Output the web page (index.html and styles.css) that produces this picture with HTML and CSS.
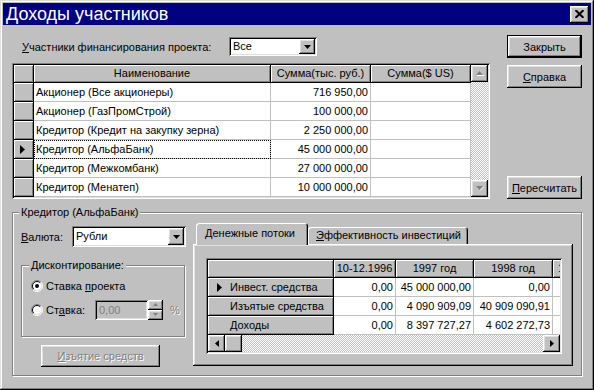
FILE: index.html
```html
<!DOCTYPE html>
<html lang="ru">
<head>
<meta charset="utf-8">
<title>Доходы участников</title>
<link rel="stylesheet" href="styles.css">
</head>
<body>
<div class="window">
  <div class="titlebar">
    <span class="title">Доходы участников</span>
    <div class="close btn-raised">
      <svg width="9" height="8" viewBox="0 0 9 8"><path d="M0.5 0 L8.5 8 M8.5 0 L0.5 8" stroke="#000" stroke-width="2"/></svg>
    </div>
  </div>
  <div class="content">
    <div class="top">
      <div class="left">
        <div class="filter">
          <span class="filter-label"><u>У</u>частники финансирования проекта:</span>
          <div class="combo combo-all">
            <span class="combo-val">Все</span>
            <span class="dd btn-raised"><svg width="7" height="4" viewBox="0 0 7 4"><path d="M0 0H7L3.5 4Z" fill="#000"/></svg></span>
          </div>
        </div>
        <div class="dbgrid">
          <div class="cells cells-top">
            <div class="fx"></div>
            <div class="fx hd">Наименование</div>
            <div class="fx hd">Сумма(тыс. руб.)</div>
            <div class="fx hd">Сумма($ US)</div>

            <div class="fx"></div>
            <div class="c">Акционер (Все акционеры)</div>
            <div class="c num">716 950,00</div>
            <div class="c"></div>

            <div class="fx"></div>
            <div class="c">Акционер (ГазПромСтрой)</div>
            <div class="c num">100 000,00</div>
            <div class="c"></div>

            <div class="fx"></div>
            <div class="c">Кредитор (Кредит на закупку зерна)</div>
            <div class="c num">2 250 000,00</div>
            <div class="c"></div>

            <div class="fx ind"><svg width="5" height="9" viewBox="0 0 5 9"><path d="M0 0L5 4.5L0 9Z" fill="#000"/></svg></div>
            <div class="c focus">Кредитор (АльфаБанк)</div>
            <div class="c num">45 000 000,00</div>
            <div class="c"></div>

            <div class="fx"></div>
            <div class="c">Кредитор (Межкомбанк)</div>
            <div class="c num">27 000 000,00</div>
            <div class="c"></div>

            <div class="fx"></div>
            <div class="c">Кредитор (Менатеп)</div>
            <div class="c num">10 000 000,00</div>
            <div class="c"></div>
          </div>
          <div class="vscroll">
            <div class="sb-btn btn-raised"><svg width="8" height="5" viewBox="0 0 8 5"><path d="M3.5 0L7 4H0Z" fill="#808080"/><path d="M1 4.5H8" stroke="#fff"/></svg></div>
            <div class="track"></div>
            <div class="sb-btn btn-raised"><svg width="8" height="5" viewBox="0 0 8 5"><path d="M0 0H7L3.5 4Z" fill="#808080"/><path d="M4 4.5L8 0.5" stroke="#fff"/></svg></div>
          </div>
        </div>
      </div>
      <div class="buttons">
        <div class="btn btn-default"><span class="btn-in btn-raised">Закрыть</span></div>
        <div class="btn"><span class="btn-in btn-raised"><u>С</u>правка</span></div>
        <div class="spacer"></div>
        <div class="btn"><span class="btn-in btn-raised"><u>П</u>ересчитать</span></div>
      </div>
    </div>

    <fieldset class="group">
      <legend>Кредитор (АльфаБанк)</legend>
      <div class="group-body">
        <div class="gleft">
          <div class="currency">
            <span class="cur-label"><u>В</u>алюта:</span>
            <div class="combo combo-cur">
              <span class="combo-val">Рубли</span>
              <span class="dd btn-raised"><svg width="7" height="4" viewBox="0 0 7 4"><path d="M0 0H7L3.5 4Z" fill="#000"/></svg></span>
            </div>
          </div>
          <fieldset class="disc">
            <legend>Дисконтирование:</legend>
            <div class="radio-row">
              <svg class="radio" width="12" height="12" viewBox="0 0 12 12">
                <circle cx="6" cy="6" r="5" fill="#fff"/>
                <path d="M2.1 9.9A5.5 5.5 0 0 1 9.9 2.1" stroke="#808080" fill="none"/>
                <path d="M9.9 2.1A5.5 5.5 0 0 1 2.1 9.9" stroke="#fff" fill="none"/>
                <path d="M2.8 9.2A4.5 4.5 0 0 1 9.2 2.8" stroke="#000" fill="none"/>
                <path d="M9.2 2.8A4.5 4.5 0 0 1 2.8 9.2" stroke="#dfdfdf" fill="none"/>
                <circle cx="6" cy="6" r="2" fill="#000"/>
              </svg>
              <span>Ставка <u>п</u>роекта</span>
            </div>
            <div class="radio-row">
              <svg class="radio" width="12" height="12" viewBox="0 0 12 12">
                <circle cx="6" cy="6" r="5" fill="#fff"/>
                <path d="M2.1 9.9A5.5 5.5 0 0 1 9.9 2.1" stroke="#808080" fill="none"/>
                <path d="M9.9 2.1A5.5 5.5 0 0 1 2.1 9.9" stroke="#fff" fill="none"/>
                <path d="M2.8 9.2A4.5 4.5 0 0 1 9.2 2.8" stroke="#000" fill="none"/>
                <path d="M9.2 2.8A4.5 4.5 0 0 1 2.8 9.2" stroke="#dfdfdf" fill="none"/>
              </svg>
              <span class="rate-label">Ст<u>а</u>вка:</span>
              <div class="edit">0,00</div>
              <div class="spin">
                <div class="spin-btn btn-raised"><svg width="5" height="3" viewBox="0 0 5 3"><path d="M2.5 0L5 3H0Z" fill="#808080"/></svg></div>
                <div class="spin-btn btn-raised"><svg width="5" height="3" viewBox="0 0 5 3"><path d="M0 0H5L2.5 3Z" fill="#808080"/></svg></div>
              </div>
              <span class="pct">%</span>
            </div>
          </fieldset>
          <div class="btn btn-withdraw"><span class="btn-in btn-raised disabled"><u>И</u>зъятие средств</span></div>
        </div>

        <div class="tabs">
          <div class="tab-row">
            <div class="tab tab-active"><u>Д</u>енежные потоки</div>
            <div class="tab tab-other"><u>Э</u>ффективность инвестиций</div>
          </div>
          <div class="tab-page">
            <div class="dbgrid2">
              <div class="cells cells-bottom">
                <div class="fx"></div>
                <div class="fx hd">10-12.1996</div>
                <div class="fx hd">1997 год</div>
                <div class="fx hd">1998 год</div>
                <div class="fx hd hd-cut">1999 год</div>

                <div class="fx rh"><svg class="rh-ind" width="5" height="9" viewBox="0 0 5 9"><path d="M0 0L5 4.5L0 9Z" fill="#000"/></svg>Инвест. средства</div>
                <div class="c num">0,00</div>
                <div class="c num">45 000 000,00</div>
                <div class="c num">0,00</div>
                <div class="c"></div>

                <div class="fx rh">Изъятые средства</div>
                <div class="c num">0,00</div>
                <div class="c num">4 090 909,09</div>
                <div class="c num">40 909 090,91</div>
                <div class="c"></div>

                <div class="fx rh">Доходы</div>
                <div class="c num">0,00</div>
                <div class="c num">8 397 727,27</div>
                <div class="c num">4 602 272,73</div>
                <div class="c"></div>
              </div>
              <div class="hscroll">
                <div class="sb-btn btn-raised"><svg width="4" height="7" viewBox="0 0 4 7"><path d="M4 0V7L0 3.5Z" fill="#000"/></svg></div>
                <div class="thumb btn-raised"></div>
                <div class="track"></div>
                <div class="sb-btn btn-raised"><svg width="4" height="7" viewBox="0 0 4 7"><path d="M0 0V7L4 3.5Z" fill="#000"/></svg></div>
              </div>
            </div>
          </div>
        </div>
      </div>
    </fieldset>
  </div>
</div>
</body>
</html>
```

FILE: styles.css
```css
* { box-sizing: border-box; }
html, body { margin: 0; padding: 0; }
body {
  width: 594px;
  height: 390px;
  overflow: hidden;
  background: #c0c0c0;
  font-family: "Liberation Sans", Arial, sans-serif;
  font-size: 11px;
  color: #000;
}
u { text-decoration: underline; text-underline-offset: 1px; }

.btn-raised {
  background: #c0c0c0;
  box-shadow: inset -1px -1px #000, inset 1px 1px #fff, inset -2px -2px #808080, inset 2px 2px #dfdfdf;
}

.window {
  width: 594px;
  height: 390px;
  padding: 3px;
  background: #c0c0c0;
  box-shadow: inset -1px -1px #000, inset 1px 1px #dfdfdf, inset -2px -2px #808080, inset 2px 2px #fff;
  display: flex;
  flex-direction: column;
}

.titlebar {
  height: 22px;
  background: #000080;
  color: #fff;
  display: flex;
  align-items: center;
  justify-content: space-between;
  padding: 0 2px 0 3px;
}
.title { font-size: 18px; line-height: 22px; }
.close {
  width: 19px;
  height: 17px;
  display: flex;
  align-items: center;
  justify-content: center;
}

.content { padding: 0 9px; flex: 1; }

.top { display: flex; gap: 17px; }
.left { width: 478px; padding-top: 12px; }

.filter { display: flex; align-items: center; height: 19px; }
.filter-label { width: 217px; padding-left: 10px; white-space: nowrap; }

.combo {
  display: flex;
  background: #fff;
  padding: 2px;
  box-shadow: inset 1px 1px #808080, inset -1px -1px #fff, inset 2px 2px #000, inset -2px -2px #dfdfdf;
}
.combo-all { width: 88px; height: 19px; }
.combo-cur { width: 114px; height: 21px; }
.combo-val { flex: 1; padding-left: 2px; line-height: 15px; }
.combo-cur .combo-val { line-height: 17px; }
.dd { width: 16px; display: flex; align-items: center; justify-content: center; }

.dbgrid {
  margin-top: 7px;
  height: 136px;
  padding: 2px;
  display: flex;
  background: #c0c0c0;
  box-shadow: inset 1px 1px #808080, inset -1px -1px #fff, inset 2px 2px #000, inset -2px -2px #dfdfdf;
}
.cells { display: grid; }
.cells-top {
  grid-template-columns: 20px 237px 100px 100px;
  grid-template-rows: 18px repeat(6, 19px);
}
.fx {
  background: #c0c0c0;
  border-right: 1px solid #000;
  border-bottom: 1px solid #000;
  box-shadow: inset 1px 1px #fff, inset -1px -1px #808080;
  white-space: nowrap;
  overflow: hidden;
}
.hd { text-align: center; line-height: 17px; }
.ind { display: flex; align-items: center; padding-left: 6px; }
.c {
  background: #fff;
  border-right: 1px solid #c0c0c0;
  border-bottom: 1px solid #c0c0c0;
  padding: 0 2px;
  line-height: 18px;
  white-space: nowrap;
  overflow: hidden;
}
.num { text-align: right; }
.focus { outline: 1px dotted #000; outline-offset: -1px; }

.vscroll { width: 17px; display: flex; flex-direction: column; }
.sb-btn {
  width: 17px;
  height: 17px;
  flex: none;
  display: flex;
  align-items: center;
  justify-content: center;
}
.track {
  flex: 1;
  background: repeating-conic-gradient(#fff 0 25%, #c0c0c0 0 50%) 0 0 / 2px 2px;
}

.buttons { width: 75px; padding-top: 10px; display: flex; flex-direction: column; height: 174px; }
.spacer { flex: 1; }
.btn { height: 23px; display: flex; }
.btn + .btn { margin-top: 7px; }
.btn-in {
  flex: 1;
  display: flex;
  align-items: center;
  justify-content: center;
  white-space: nowrap;
}
.btn-default { border: 1px solid #000; }

.group {
  margin: 6px 0 0 0;
  padding: 0 8px 0 8px;
  height: 171px;
  border: 1px solid #808080;
  box-shadow: 1px 1px #fff, inset 1px 1px #fff;
  min-width: 0;
}
.group > legend, .disc > legend {
  padding: 0 2px;
  margin-left: -2px;
  line-height: 14px;
  background: #c0c0c0;
  white-space: nowrap;
}
.group-body { display: flex; gap: 7px; padding-top: 4px; }

.gleft { width: 165px; padding-top: 3px; }
.currency { display: flex; align-items: center; height: 21px; }
.cur-label { width: 51px; }

.disc {
  margin: 11px 1px 0 0;
  padding: 3px 0 0 9px;
  height: 79px;
  border: 1px solid #808080;
  box-shadow: 1px 1px #fff, inset 1px 1px #fff;
  min-width: 0;
}
.radio-row { display: flex; align-items: center; height: 21px; white-space: nowrap; }
.radio-row + .radio-row { margin-top: 3px; }
.radio { margin-right: 3px; flex: none; }
.rate-label { width: 49px; }
.edit {
  width: 53px;
  height: 20px;
  padding: 3px 4px;
  color: #808080;
  line-height: 14px;
  box-shadow: inset 1px 1px #808080, inset -1px -1px #fff, inset 2px 2px #000, inset -2px -2px #dfdfdf;
}
.spin { width: 15px; height: 20px; display: flex; flex-direction: column; }
.spin-btn { flex: 1; display: flex; align-items: center; justify-content: center; }
.pct { margin-left: 7px; color: #808080; text-shadow: 1px 1px #fff; }

.btn-withdraw { width: 119px; height: 22px; margin: 8px 0 0 20px; }
.disabled { color: #808080; text-shadow: 1px 1px #fff; }

.tabs { width: 380px; display: flex; flex-direction: column; }
.tab-row { display: flex; align-items: flex-end; height: 21px; padding-left: 3px; position: relative; z-index: 1; }
.tab {
  height: 17px;
  line-height: 16px;
  white-space: nowrap;
  border-radius: 3px 3px 0 0;
  background: #c0c0c0;
  box-shadow: inset 1px 1px #fff, inset -1px 0 #000, inset -2px 0 #808080;
}
.tab-active {
  width: 112px;
  height: 22px;
  margin-bottom: -1px;
  line-height: 20px;
  padding-left: 9px;
}
.tab-other { width: 160px; padding-left: 8px; }

.tab-page {
  height: 122px;
  padding: 14px 11px 12px 13px;
  box-shadow: inset -1px -1px #000, inset 1px 1px #fff, inset -2px -2px #808080, inset 2px 2px #dfdfdf;
}
.dbgrid2 {
  height: 96px;
  padding: 2px;
  background: #c0c0c0;
  box-shadow: inset 1px 1px #808080, inset -1px -1px #fff, inset 2px 2px #000, inset -2px -2px #dfdfdf;
  overflow: hidden;
}
.cells-bottom {
  grid-template-columns: 126px 62px 78px 79px 60px;
  grid-template-rows: 18px repeat(3, 19px);
  width: 352px;
  overflow: hidden;
}
.rh { line-height: 18px; padding-left: 22px; position: relative; }
.rh-ind { position: absolute; left: 9px; top: 5px; }
.hd-cut { text-align: left; padding-left: 5px; }

.hscroll { display: flex; height: 17px; width: 352px; }
.thumb { width: 17px; height: 17px; flex: none; }
```
